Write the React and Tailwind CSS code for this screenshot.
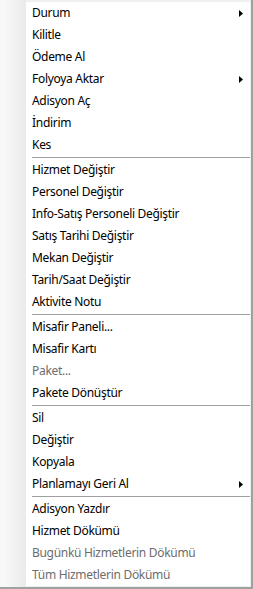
import React from "react";

const groups = [
  [
    { label: "Durum", sub: true },
    { label: "Kilitle" },
    { label: "Ödeme Al" },
    { label: "Folyoya Aktar", sub: true },
    { label: "Adisyon Aç" },
    { label: "İndirim" },
    { label: "Kes" },
  ],
  [
    { label: "Hizmet Değiştir" },
    { label: "Personel Değiştir" },
    { label: "Info-Satış Personeli Değiştir" },
    { label: "Satış Tarihi Değiştir" },
    { label: "Mekan Değiştir" },
    { label: "Tarih/Saat Değiştir" },
    { label: "Aktivite Notu" },
  ],
  [
    { label: "Misafir Paneli..." },
    { label: "Misafir Kartı" },
    { label: "Paket...", disabled: true },
    { label: "Pakete Dönüştür" },
  ],
  [
    { label: "Sil" },
    { label: "Değiştir" },
    { label: "Kopyala" },
    { label: "Planlamayı Geri Al", sub: true },
  ],
  [
    { label: "Adisyon Yazdır" },
    { label: "Hizmet Dökümü" },
    { label: "Bugünkü Hizmetlerin Dökümü", disabled: true },
    { label: "Tüm Hizmetlerin Dökümü", disabled: true },
  ],
];

const MenuItem = ({ label, sub, disabled }) => (
  <div className="h-[22px] flex items-center justify-between pl-[6px] pr-[7px]">
    <span className={disabled ? "text-[#6d6d6d]" : "text-black"}>{label}</span>
    {sub && (
      <svg width="4" height="7" viewBox="0 0 4 7">
        <polygon points="0,0 4,3.5 0,7" fill="#000" />
      </svg>
    )}
  </div>
);

const App = () => {
  return (
    <div
      className="w-[253px] h-[589px] flex border-r-2 border-b-2 border-[#a0a0a0] text-[12px] leading-none tracking-[-0.3px]"
      style={{ fontFamily: '"Noto Sans", "Open Sans", sans-serif' }}
    >
      {/* Gutter */}
      <div className="w-[26px] h-full flex">
        <div className="w-[2px] h-full bg-[#f7f7f7]" />
        <div className="flex-1 h-full bg-gradient-to-r from-[#f9f9f9] to-[#eaeaea]" />
      </div>

      {/* Items */}
      <div className="flex-1 bg-[#f0f0f0] pt-[2px] pr-[1px] pb-[1px]">
        <div className="bg-white h-full">
          {groups.map((group, gi) => (
            <div key={gi}>
              {gi > 0 && (
                <div className="h-[3px] pl-[6px] flex items-center">
                  <div className="h-px w-full bg-[#a0a0a0]" />
                </div>
              )}
              {group.map((item) => (
                <MenuItem key={item.label} {...item} />
              ))}
            </div>
          ))}
        </div>
      </div>
    </div>
  );
};

export default App;
